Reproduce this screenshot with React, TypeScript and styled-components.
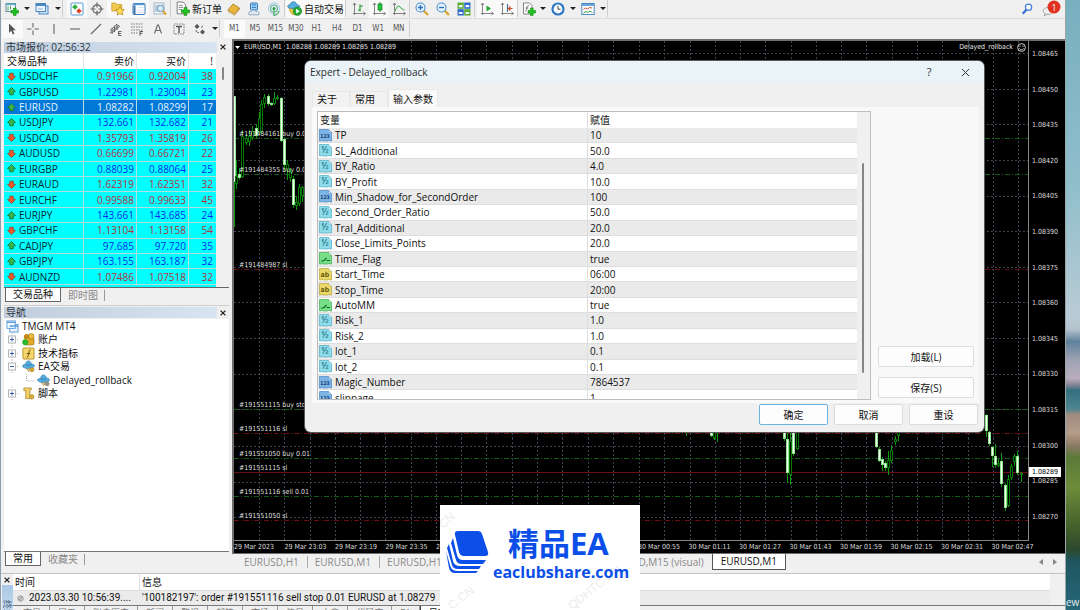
import React from 'react';
import styled, { createGlobalStyle, css } from 'styled-components';

const UI = '"Open Sans", "Noto Sans CJK SC", sans-serif';
const CHART = '"DejaVu Sans Condensed", "DejaVu Sans", sans-serif';

const GlobalStyle = createGlobalStyle`
  * { box-sizing: border-box; }
  body { margin: 0; font-family: ${UI}; font-size: 10px; line-height: 14px; color: #111; overflow: hidden; }
  button { font: inherit; color: inherit; border: 0; padding: 0; background: none; }
  svg { display: block; flex: none; }
`;

/* ---------- shell ---------- */
const Screen = styled.div`
  display: flex;
  height: 100vh;
  background: #7fa3b3;
`;
const Terminal = styled.div`
  position: relative;
  flex: 1;
  min-width: 0;
  display: flex;
  flex-direction: column;
  background: #f0f0f0;
  border-left: 1px solid #8d9dab;
  border-right: 1px solid #9aa5a8;
`;
const Desktop = styled.aside`
  width: 14px;
  overflow: hidden;
  display: flex;
  align-items: flex-end;
  color: #e6eef0;
  line-height: 15px;
  background: linear-gradient(
    #78afbe 0%, #8fbecb 30%, #b9cbd4 52%, #b5c2cd 54%, #5f819b 56%, #9fa3b4 59%,
    #b9aebd 62%, #8b8799 63%, #35707f 64%, #4d8590 67%, #a08c80 68%, #b59d8a 71%,
    #8d7a66 73%, #5c7a38 75%, #6c8c3a 80%, #47632c 86%, #2c4a2c 90%, #1f5560 92%, #266878 100%
  );
`;
const Main = styled.div`
  flex: 1;
  min-height: 0;
  display: flex;
`;

/* ---------- toolbars ---------- */
const Toolbar = styled.div<{ $line?: boolean }>`
  flex: none;
  height: ${p => (p.$line ? 19 : 20)}px;
  padding: 0 0 1px 1px;
  display: flex;
  align-items: center;
  ${p => p.$line && css`border-bottom: 1px solid #dcdcdc;`}
`;
const Tool = styled.button<{ $w?: number; $on?: boolean }>`
  width: ${p => p.$w ?? 21}px;
  height: 18px;
  flex: none;
  display: flex;
  align-items: center;
  justify-content: center;
  ${p => p.$on && css`background: #f9f9f9;`}
`;
const TextTool = styled.button<{ $on?: boolean }>`
  height: 18px;
  flex: none;
  display: flex;
  align-items: center;
  gap: 2px;
  padding: 0 1px;
  white-space: nowrap;
  ${p => p.$on && css`background: #f9f9f9;`}
`;
const Divider = styled.span<{ $w?: number }>`
  flex: none;
  width: ${p => p.$w ?? 4}px;
  height: 17px;
  border-left: 1px solid #cfcfcf;
`;
const Drop = styled.button`
  width: 9px;
  height: 18px;
  flex: none;
  display: flex;
  align-items: center;
  justify-content: center;
  &::after { content: ''; border: 3px solid transparent; border-top: 3px solid #222; border-bottom: 0; }
`;
const Grow = styled.span`flex: 1;`;
const ToolGrid = styled.div<{ $n: number; $w: number }>`
  display: grid;
  grid-template-columns: repeat(${p => p.$n}, 1fr);
  width: ${p => p.$w}px;
  flex: none;
`;
const Cell = styled.button<{ $on?: boolean }>`
  height: 18px;
  display: flex;
  align-items: center;
  justify-content: center;
  font: 8px/18px ${CHART};
  color: #555;
  ${p => p.$on && css`background: #fafafa;`}
`;

/* ---------- side bar ---------- */
const Sidebar = styled.div`
  width: 231px;
  flex: none;
  padding: 2px 3px 0 3px;
  display: flex;
  flex-direction: column;
`;
const PanelTitle = styled.div`
  height: 12px;
  flex: none;
  display: flex;
  align-items: center;
  line-height: 12px;
`;
const TitleText = styled.span`
  width: 213px;
  height: 11px;
  padding-left: 2px;
  line-height: 11px;
  color: #2b3440;
  background: linear-gradient(90deg, #bfcddc, #d7e5f3);
`;
const Close = styled.button`
  width: 12px;
  height: 11px;
  display: flex;
  align-items: center;
  justify-content: center;
`;
const MarketBody = styled.div`
  height: 235px;
  flex: none;
  display: flex;
  flex-direction: column;
  overflow: hidden;
  background: linear-gradient(90deg, #00ffff 212px, #f0f0f0 212px);
  border-bottom: 1px solid #666;
  position: relative;
`;
const Quotes = styled.table`
  width: 212px;
  height: 232px;
  flex: none;
  border-collapse: separate;
  border-spacing: 0;
  table-layout: fixed;
  th, td { padding: 0 2px 0 0; text-align: right; font-weight: 400; line-height: 14px; border-right: 1px solid #b4dede; border-bottom: 1px solid #b4dede; }
  th { height: 16px; background: #fff; border-color: #e4e4e4; border-bottom: 0; }
  th:first-child, td:first-child { text-align: left; padding-left: 3px; }
  th:last-child, td:last-child { border-right: 0; padding-right: 3px; }
`;
const QuoteRow = styled.tr<{ $up: boolean; $sel: boolean }>`
  color: ${p => (p.$sel ? '#e8f4ff' : p.$up ? '#0a2cf0' : '#b5303a')};
  background: ${p => (p.$sel ? '#0078d7' : '#00ffff')};
  td:first-child { color: ${p => (p.$sel ? '#e8f4ff' : '#062830')}; }
`;
const Symbol = styled.span`
  display: flex;
  align-items: center;
  gap: 3px;
`;
const Thumb = styled.span<{ $h: number; $x: number; $y: number }>`
  position: absolute;
  left: ${p => p.$x}px;
  top: ${p => p.$y}px;
  width: 2px;
  height: ${p => p.$h}px;
  border-radius: 1px;
  background: #868686;
`;
const Tabs = styled.div<{ $last?: boolean }>`
  height: 15px;
  flex: none;
  display: flex;
  padding-left: 1px;
  margin-bottom: ${p => (p.$last ? 6 : 0)}px;
`;
const SideTab = styled.button<{ $on?: boolean }>`
  height: 14px;
  padding: 0 7px;
  line-height: 13px;
  color: ${p => (p.$on ? '#111' : '#8a8a8a')};
  ${p => p.$on
    ? css`background: #fff; border: 1px solid #666; border-top: 0;`
    : css`background: linear-gradient(#999, #999) right center / 1px 11px no-repeat;`}
`;
const NavTitle = styled(PanelTitle)`
  margin-top: 2px;
  height: 14px;
  border-top: 1px solid #cfcfcf;
`;
const Tree = styled.ul`
  flex: 1;
  margin: 0;
  padding: 0 0 0 2px;
  list-style: none;
  background: #fff;
  border-bottom: 1px solid #777;
  display: grid;
  grid-template-rows: 14px 13px 14px 13px 14px 13px;
`;
const Node = styled.li<{ $depth: number }>`
  display: flex;
  align-items: center;
  gap: 3px;
  padding-left: ${p => (p.$depth === 2 ? 20 : 0)}px;
  line-height: 13px;
  white-space: nowrap;
`;

/* ---------- chart ---------- */
const ChartColumn = styled.div`
  flex: 1;
  min-width: 0;
  display: flex;
  flex-direction: column;
`;
const ChartFrame = styled.div`
  height: 515px;
  flex: none;
  background: #000;
  border: 1px solid #6e6e6e;
  border-width: 2px 0 1px 2px;
  display: grid;
  grid-template-columns: minmax(0, 1fr) 36px;
  grid-template-rows: 500px 12px;
  color: #dcdcdc;
  font: 7px/12px ${CHART};
  overflow: hidden;
`;
const Plot = styled.div`
  position: relative;
  border: 1px solid #858585;
  border-width: 0 1px 1px 0;
  overflow: hidden;
  svg.plot { position: absolute; inset: 0; width: 100%; height: 100%; }
`;
const PlotHeader = styled.div`
  position: relative;
  display: flex;
  align-items: center;
  height: 12px;
  padding: 0 2px 0 1px;
  gap: 4px;
  color: #e6e6e6;
  white-space: pre;
`;
const PriceAxis = styled.div`
  position: relative;
  padding-top: 7px;
  display: flex;
  flex-direction: column;
`;
const Prices = styled.div`
  height: 475px;
  display: flex;
  flex-direction: column;
  justify-content: space-between;
  padding-left: 3px;
`;
const PriceTag = styled.span`
  position: absolute;
  left: 0;
  top: 426px;
  width: 32px;
  height: 10px;
  padding-left: 3px;
  line-height: 10px;
  color: #000;
  background: #fff;
`;
const TimeAxis = styled.div`
  grid-column: 1 / 3;
  display: grid;
  grid-template-columns: repeat(16, 1fr);
  width: 808px;
  white-space: nowrap;
`;
const ChartTabs = styled.div`
  display: flex;
  height: 18px;
  padding-left: 4px;
  color: #8a8a8a;
`;
const ChartTab = styled.button<{ $on?: boolean }>`
  height: 16px;
  padding: 0 8px;
  line-height: 15px;
  white-space: nowrap;
  ${p => p.$on ? css`
    color: #111;
    background: #fff;
    border: 1px solid #555;
    border-top: 0;
  ` : css`
    &:not(:first-child) { background: linear-gradient(#aaa, #aaa) left center / 1px 12px no-repeat; }
  `}
`;
const Scrollers = styled.span`
  margin-left: auto;
  width: 26px;
  display: flex;
  gap: 10px;
  align-items: center;
  height: 15px;
`;

/* ---------- journal ---------- */
const Journal = styled.div`
  height: 37px;
  flex: none;
  display: flex;
  border-top: 1px solid #c4c4c4;
  overflow: hidden;
`;
const JournalHandle = styled.div`
  width: 12px;
  flex: none;
  display: flex;
  flex-direction: column;
  overflow: hidden;
`;
const Vertical = styled.span`
  margin: 0 0 0 1px;
  flex: 1;
  min-height: 0;
  padding-top: 15px;
  line-height: 11px;
  font-size: 9px;
  color: #46607a;
  background: linear-gradient(#a9c8e8, #c5daef);
  writing-mode: vertical-rl;
  text-orientation: sideways;
  white-space: nowrap;
`;
const JournalBody = styled.div`
  flex: 1;
  min-width: 0;
`;
const Log = styled.table`
  width: 100%;
  border-spacing: 0;
  table-layout: fixed;
  background: #fff;
  border-right: 15px solid #f0f0f0;
  th, td { padding: 0 0 0 2px; height: 16px; line-height: 15px; text-align: left; font-weight: 400; white-space: nowrap; }
  th:first-child { border-right: 1px solid #e0e0e0; }
  td { background: #ebebeb; border-top: 1px solid #dedede; height: 15px; line-height: 14px; font-family: Roboto, ${UI}; }
`;
const Stamp = styled.span`
  display: flex;
  align-items: center;
  gap: 5px;
  padding-left: 2px;
`;
const JournalTabs = styled.div`
  display: flex;
  border-top: 1px solid #777;
  padding-left: 2px;
  font-size: 9px;
  line-height: 14px;
  color: #777;
`;
const JournalTab = styled.button<{ $on?: boolean }>`
  flex: none;
  padding: 0 8px;
  border-right: 1px solid #999;
  white-space: nowrap;
  ${p => p.$on && css`background: #fff; color: #111; border-left: 1px solid #444; border-right-color: #444;`}
`;

/* ---------- dialog ---------- */
const Dialog = styled.section`
  position: absolute;
  left: 304px;
  top: 61px;
  width: 679px;
  border-radius: 6px;
  background: #f0f0f0;
  overflow: hidden;
  box-shadow: 0 0 0 1px #55595c;
  padding-bottom: 7px;
`;
const DialogTitle = styled.header`
  height: 22px;
  display: flex;
  align-items: center;
  padding: 0 12px 0 5px;
  background: #eaf4f8;
  color: #2c2c2c;
  span { flex: 1; }
`;
const TitleButton = styled.button`
  width: 14px;
  display: flex;
  justify-content: center;
  font-size: 11px;
  & + & { margin-left: 22px; }
`;
const DialogTabs = styled.div`
  height: 24px;
  padding: 6px 0 0 7px;
  display: flex;
  align-items: flex-end;
`;
const DialogTab = styled.button<{ $on?: boolean }>`
  height: ${p => (p.$on ? 18 : 16)}px;
  width: ${p => (p.$on ? 50 : 38)}px;
  padding-left: 4px;
  text-align: left;
  white-space: nowrap;
  line-height: ${p => (p.$on ? 16 : 15)}px;
  background: ${p => (p.$on ? '#fafafa' : '#f2f2f2')};
  border: 1px solid #e8e8e8;
  border-bottom: 0;
`;
const Page = styled.div`
  margin: 0 5px 0 7px;
  height: 296px;
  padding: 4px 5px 0;
  display: flex;
  background: #f9f9f9;
`;
const InputsFrame = styled.div`
  position: relative;
  width: 554px;
  height: 289px;
  border: 1px solid #bdbdbd;
  overflow: hidden;
  background: linear-gradient(90deg, #fff 539px, #f0f0f0 539px);
`;
const Inputs = styled.table`
  width: 539px;
  height: 294px;
  table-layout: fixed;
  border-spacing: 0;
  th, td { padding: 0 0 0 2px; text-align: left; font-weight: 400; line-height: 14px; border-bottom: 1px solid #dedede; }
  th { height: 16px; background: #fff; border-bottom: 0; }
  th:first-child, td:first-child { border-right: 1px solid #dedede; }
  td:first-child { padding-left: 1px; }
  tbody tr { background: #fff; }
  tbody tr:nth-child(odd) { background: #eaeaea; }
`;
const Param = styled.span`
  display: flex;
  align-items: center;
  gap: 3px;
  height: 14px;
`;
const Side = styled.div`
  width: 96px;
  margin-left: 7px;
  padding-top: 235px;
  display: flex;
  flex-direction: column;
  gap: 10px;
`;
const PushButton = styled.button<{ $main?: boolean }>`
  height: 21px;
  width: ${p => (p.$main === undefined ? 96 : 69)}px;
  background: #fdfdfd;
  border: 1px solid ${p => (p.$main ? '#6fb1e0' : '#dcdcdc')};
  border-radius: 2px;
  line-height: 18px;
`;
const Footer = styled.footer`
  padding: 1px 6px 0 0;
  display: flex;
  justify-content: flex-end;
  gap: 6px;
`;

/* ---------- watermark card ---------- */
const Brand = styled.div`
  position: absolute;
  left: 439px;
  top: 505px;
  width: 200px;
  height: 105px;
  background: #fff;
`;

/* ---------- data ---------- */
const quotes: [string, string, string, number, boolean][] = [
  ['USDCHF', '0.91966', '0.92004', 38, false],
  ['GBPUSD', '1.22981', '1.23004', 23, true],
  ['EURUSD', '1.08282', '1.08299', 17, true],
  ['USDJPY', '132.661', '132.682', 21, true],
  ['USDCAD', '1.35793', '1.35819', 26, false],
  ['AUDUSD', '0.66699', '0.66721', 22, false],
  ['EURGBP', '0.88039', '0.88064', 25, true],
  ['EURAUD', '1.62319', '1.62351', 32, false],
  ['EURCHF', '0.99588', '0.99633', 45, false],
  ['EURJPY', '143.661', '143.685', 24, true],
  ['GBPCHF', '1.13104', '1.13158', 54, false],
  ['CADJPY', '97.685', '97.720', 35, true],
  ['GBPJPY', '163.155', '163.187', 32, true],
  ['AUDNZD', '1.07486', '1.07518', 32, false],
];

type Kind = 'int' | 'real' | 'bool' | 'str';
const inputs: [Kind, string, string][] = [
  ['int', 'TP', '10'],
  ['real', 'SL_Additional', '50.0'],
  ['real', 'BY_Ratio', '4.0'],
  ['real', 'BY_Profit', '10.0'],
  ['int', 'Min_Shadow_for_SecondOrder', '100'],
  ['real', 'Second_Order_Ratio', '50.0'],
  ['real', 'Tral_Additional', '20.0'],
  ['real', 'Close_Limits_Points', '20.0'],
  ['bool', 'Time_Flag', 'true'],
  ['str', 'Start_Time', '06:00'],
  ['str', 'Stop_Time', '20:00'],
  ['bool', 'AutoMM', 'true'],
  ['real', 'Risk_1', '1.0'],
  ['real', 'Risk_2', '1.0'],
  ['real', 'lot_1', '0.1'],
  ['real', 'lot_2', '0.1'],
  ['int', 'Magic_Number', '7864537'],
  ['int', 'slippage', '1'],
];

const times = ['29 Mar 2023', '29 Mar 23:03', '29 Mar 23:19', '29 Mar 23:35', '29 Mar 23:51', '30 Mar 00:07', '30 Mar 00:23', '30 Mar 00:39',
  '30 Mar 00:55', '30 Mar 01:11', '30 Mar 01:27', '30 Mar 01:43', '30 Mar 01:59', '30 Mar 02:15', '30 Mar 02:31', '30 Mar 02:47'];

const orders: [number, string, string][] = [
  [138, '#191484161 buy 0.01', 'g'],
  [174, '#191484355 buy 0.01', 'g'],
  [269, '#191484987 sl', 'r'],
  [409, '#191551115 buy stop 0.01', 'g'],
  [433, '#191551116 sl', 'r'],
  [457, '#191551050 buy 0.01', 'g'],
  [471, '#191551115 sl', 'r'],
  [495, '#191551116 sell 0.01', 'g'],
  [519, '#191551050 sl', 'r'],
];

// x, wick top, wick bottom, body top, body bottom, falling candle (filled)
const candles: [number, number, number, number, number, boolean][] = [
  [235, 96, 227, 96, 182, true], [237, 160, 189, 176, 184, false], [240, 168, 180, 174, 178, true],
  [243, 130, 178, 136, 177, false], [247, 134, 145, 138, 143, false], [250, 130, 146, 136, 142, false],
  [253, 126, 140, 131, 138, false], [257, 124, 138, 128, 136, true], [260, 112, 134, 118, 133, false],
  [262, 100, 134, 104, 132, false], [265, 94, 108, 97, 104, false], [269, 94, 106, 96, 104, true],
  [272, 102, 106, 103, 105, true], [275, 92, 105, 98, 104, false], [278, 95, 100, 97, 99, false],
  [282, 97, 142, 98, 141, true], [285, 138, 172, 139, 165, true], [288, 160, 180, 164, 170, false],
  [291, 168, 182, 172, 178, false], [294, 176, 208, 179, 205, true], [297, 196, 210, 202, 206, false],
  [300, 184, 206, 187, 204, false], [303, 186, 202, 187, 196, false],
  [711, 430, 437, 430, 436, true], [714, 430, 439, 430, 438, false], [717, 430, 441, 430, 432, false],
  [686, 430, 436, 430, 432, false],
  [784, 430, 440, 430, 438, true], [787, 430, 482, 438, 472, true], [790, 430, 484, 440, 474, false],
  [793, 430, 455, 432, 453, true], [797, 430, 449, 430, 448, false],
  [876, 430, 447, 430, 446, true], [879, 446, 461, 448, 460, true], [882, 456, 470, 458, 464, true],
  [885, 460, 470, 462, 467, true], [888, 450, 474, 459, 467, false], [891, 444, 462, 449, 460, false],
  [895, 436, 444, 438, 441, false], [898, 430, 440, 430, 436, false],
  [986, 414, 437, 415, 431, true], [989, 431, 445, 432, 443, true], [992, 445, 466, 446, 455, true],
  [995, 443, 467, 455, 464, true], [998, 458, 466, 462, 465, false], [1001, 452, 486, 460, 483, true],
  [1005, 482, 510, 484, 507, true], [1008, 474, 506, 478, 505, false], [1011, 463, 479, 465, 477, false],
  [1014, 453, 465, 455, 461, false], [1017, 450, 474, 455, 472, true], [1021, 471, 481, 472, 474, false],
];

/* ---------- icons ---------- */
const Svg = ({ w = 14, children }: { w?: number; children: React.ReactNode }) => (
  <svg width={w} height={w} viewBox="0 0 14 14" fill="none" aria-hidden="true">{children}</svg>
);
const Plus = () => <path d="M8.500 6h2.600v2.400h2.400V11h-2.400v2.400H8.500V11H6V8.400h2.500z" fill="#21c321" stroke="#0c860c" strokeWidth=".6" />;
const NewChart = () => <Svg><rect x="1" y="1.500" width="9.500" height="8" fill="#fff" stroke="#5d8da0" /><path d="M1 2.500h9.500" stroke="#5fb3c8" strokeWidth="1.600" /><path d="M3 4.500v4M5.500 4v3.500" stroke="#3a9a5a" /><Plus /></Svg>;
const Profiles = () => <Svg><rect x="4" y="4" width="9" height="8" fill="#cfe6fa" stroke="#4b86bf" /><rect x="1" y="1.500" width="9.500" height="8" fill="#eaf5ff" stroke="#4b86bf" /><path d="M1 3h9.500" stroke="#4b86bf" strokeWidth="2" /><path d="M3 7h5" stroke="#8db8de" /></Svg>;
const MarketIcon = () => <Svg><rect x="1" y="1" width="12" height="12" rx="1" fill="#fbfdff" stroke="#5a9bd0" /><path d="m5 2.200 2.800 2.800L5 7.800 2.200 5z" fill="#2fae3f" /><path d="m9 6.200 2.800 2.800L9 11.800 6.200 9z" fill="#e04a2c" /></Svg>;
const Target = () => <Svg><circle cx="7" cy="7" r="4.200" stroke="#666" strokeWidth="1.300" /><path d="M7 0.500v5M7 8.500v5M.5 7h5M8.500 7h5" stroke="#666" strokeWidth="1.200" /></Svg>;
const Favorites = () => <Svg><path d="M.8 1h4l1 1.500h5V9H.8z" fill="#f3c94d" stroke="#c29324" strokeWidth=".7" /><path d="m9 4.500 1.400 2.800 3 .4-2.200 2.100.6 3.200L9 11.600 6.200 13l.6-3.200-2.200-2.100 3-.4z" fill="#ffdf58" stroke="#b98b1c" strokeWidth=".8" /></Svg>;
const NavIcon = () => <Svg><rect x="1" y="1.500" width="12" height="11" rx="1" fill="#fff" stroke="#3c7ab8" /><path d="M1.500 2.500h11" stroke="#5ba0dc" strokeWidth="1.500" /><rect x="1.500" y="3.500" width="2" height="8.500" fill="#3e72a8" /><path d="M5.500 5.500H12M5.500 8H12M5.500 10.500H12" stroke="#dbe8f4" /></Svg>;
const Tester = () => <Svg><rect x="1" y="1" width="10" height="11" fill="#f4f8fc" stroke="#9fb6c8" /><path d="M3 3v7M5 2.500v7M9 2.500v4" stroke="#7ca1bd" /><circle cx="7.500" cy="6.500" r="3.200" fill="#d6ecfa" stroke="#6c93b2" /><path d="m10 9 3 3.600" stroke="#d9a02c" strokeWidth="2" /></Svg>;
const OrderIcon = () => <Svg w={15}><path d="M2 1h5.500L10 3.500V12H2z" fill="#fff" stroke="#777" strokeWidth=".9" /><path d="M3.500 4h4M3.500 6h4M3.500 8h3" stroke="#888" strokeWidth=".9" /><Plus /></Svg>;
const Book = () => <Svg><path d="M1 8 6 2l6.500 4-5 6z" fill="#eab73a" stroke="#a77512" strokeWidth=".8" /><path d="m1 8 6.500 4 5-6v1.500L7.500 13.300 1 9.500z" fill="#fff3c8" stroke="#a77512" strokeWidth=".6" /></Svg>;
const Vps = () => <Svg><rect x="3.500" y="1" width="7" height="7" rx="1" fill="#9fd0f5" stroke="#3679b8" /><path d="M5 3h4M5 5.500h4" stroke="#2f7fc8" /><path d="M2 12.800c-1.200-2 .2-3.800 2-3.500 1-1.600 4.300-1.600 5 0 2.200-.5 3.800 1.500 3 3.500z" fill="#dfe9f4" stroke="#7d98b6" strokeWidth=".8" /></Svg>;
const Signal = () => <Svg><circle cx="7" cy="6.500" r="5.700" fill="#e2eef5" stroke="#a9cbe6" /><circle cx="7" cy="6.500" r="3.500" stroke="#69b58b" strokeWidth="1.200" /><circle cx="7" cy="6.500" r="1.500" fill="#2a9d45" /><path d="M7 8v5.500c2.500-.5 4.500-2 5-4.500" stroke="#4fb066" strokeWidth="1.200" /></Svg>;
const Hat = ({ c = '#dca92a' }: { c?: string }) => <><path d="m4.500 8.500 2.500 4 3-3" fill="#e8c890" stroke="#c99a50" /><path d="M.5 6.500C1 5 3 4.700 4 4.500 4.300 2 5.500 1 7 1s2.700 1 3 3.300c1.200.2 3 .5 3.500 1.700C13 8.500 10 9 7 9S1 8.500.5 6.500z" fill="#55aee0" stroke="#2874a6" strokeWidth=".7" /><path d="M4 5c1.500 1 4.500 1 6 0" stroke="#2a77ab" /><circle cx="10.800" cy="10.500" r="2.300" fill={c} stroke="#8d7a3a" strokeWidth=".5" /></>;
const AutoTrade = () => <Svg w={15}><path d="M2 5.500h8c.5 4-1 7-3.500 7.500C4 12.500 2 9.500 2 5.500z" fill="#f0cb4a" stroke="#b8922a" strokeWidth=".6" /><path d="M.5 5C.8 3.700 2.300 3.600 3 3.400 3.300 1.500 4.500.8 6 .8s2.700.7 3 2.600c1 .2 2.600.4 3 1.600C11 6.700 9 7 6 7S1 6.700.5 5z" fill="#55aee0" stroke="#2874a6" strokeWidth=".7" /><circle cx="9.700" cy="9.500" r="3.900" fill="#25ad35" stroke="#12781f" strokeWidth=".6" /><path d="m8.500 7.300 3.400 2.200-3.400 2.200z" fill="#fff" /></Svg>;
const Axes = () => <path d="M2.500 1v12M1 11.500h12.500M1 3l1.500-2L4 3M11.500 10l2 1.500-2 1.500" stroke="#777" strokeWidth=".9" />;
const Bars = () => <Svg><Axes /><path d="M8 2.500v7M6 8h2M8 4h3" stroke="#2c9c3a" strokeWidth="1.200" /></Svg>;
const CandleIcon = () => <Svg><Axes /><path d="M8 0v10" stroke="#167f26" /><rect x="6" y="2" width="4" height="6" fill="#21c53b" stroke="#167f26" strokeWidth=".7" /></Svg>;
const LineIcon = () => <Svg><Axes /><path d="M3 9c2-5 3.500-6 5-4s2.500 2.500 4.500 3" stroke="#4db35a" strokeWidth="1.100" /></Svg>;
const Zoom = ({ plus }: { plus?: boolean }) => <Svg><path d="m8.500 8.500 4.500 4.500" stroke="#dba634" strokeWidth="2.400" /><circle cx="5.500" cy="5.500" r="4.500" fill="#e6f4ff" stroke="#4b8fd0" strokeWidth="1.100" /><path d={plus ? 'M3 5.500h5M5.500 3v5' : 'M3 5.500h5'} stroke="#2b70b8" strokeWidth="1.400" /></Svg>;
const Tile = () => <Svg><rect x=".5" y=".5" width="6.300" height="6.300" fill="#5aad2e" /><rect x="7.200" y=".5" width="6.300" height="6.300" fill="#2f68c8" /><rect x=".5" y="7.200" width="6.300" height="6.300" fill="#2f68c8" /><rect x="7.200" y="7.200" width="6.300" height="6.300" fill="#5aad2e" /><path d="M1.800 4.200h3.800M8.500 4.200h3.800M1.800 11h3.800M8.500 11h3.800" stroke="#eef6ff" strokeWidth="2.200" /></Svg>;
const Scroll = () => <Svg><Axes /><path d="m6.500 3.500 4.500 3-4.500 3z" fill="#27a737" /></Svg>;
const Shift = () => <Svg><Axes /><path d="M7.500 2v8" stroke="#4a6d94" strokeWidth="1.200" /><path d="m12.500 6.500-4 0 2-2m-2 2 2 2" stroke="#c85028" strokeWidth="1.200" /></Svg>;
const Indicators = () => <Svg><path d="M1.500 1h6L10 3.500V12H1.500z" fill="#fff" stroke="#777" strokeWidth=".9" /><path d="M6.800 3.500C4 3 5.500 9 3.300 9.500M3.500 6h3" stroke="#666" strokeWidth=".9" /><Plus /></Svg>;
const Clock = () => <Svg><circle cx="7" cy="7" r="5.500" fill="#fff" stroke="#2f78c4" strokeWidth="2.200" /><path d="M7 3.800V7.200h2.600" stroke="#444" /></Svg>;
const Template = () => <Svg><rect x=".8" y="1.500" width="12.400" height="11" fill="#fff" stroke="#4b88bd" /><path d="M1 3h12" stroke="#5a9ed6" strokeWidth="1.800" /><path d="m2.500 7.500 2-1.500 2 1 2-1.500 2.500.5" stroke="#c4523a" /><path d="m2.500 11 2.500-1.500 2 1 2-1.500 2.500 1.500" stroke="#3fa04c" /></Svg>;
const Cursor = () => <Svg><path d="M4 1.500v9.500l2.200-2.200 1.700 3.700 1.600-.8L7.800 8.300h3z" fill="#555" /></Svg>;
const G = ({ d }: { d: string }) => <Svg><path d={d} stroke="#666" strokeWidth="1.100" /></Svg>;
const Channel = () => <Svg><path d="M1 8.500 8 2M3 11l8-7M3 6v6M5.500 4v6M8 2v6M1 11l9-8" stroke="#666" /><path d="M9.500 9.500h3M9.500 11.500h2.500M9.500 13.500h3M9.700 9.500v4" stroke="#555" strokeWidth=".9" /></Svg>;
const Fibo = () => <Svg><path d="M1 2h12M1 5h12M1 8h12M1 11h7" stroke="#777" strokeDasharray="1.500 1" /><path d="M10 9.500h3M10 11.300h2.400M10 9.200v4.500" stroke="#555" /></Svg>;
const TextBox = () => <Svg><rect x="2" y="2" width="10" height="10" stroke="#777" strokeDasharray="1.500 1" /><path d="M4 4.500h6M7 4.500V11" stroke="#555" strokeWidth="1.400" /></Svg>;
const Arrows = () => <Svg><path d="m4 2 2.500 2.500L4 7 1.500 4.500z" fill="#555" /><path d="m9.500 7.500 2.500 2.500-2.500 2.500L7 10z" fill="#555" /><path d="M3 8c0 2 1 2.500 3 2.500M8 5.500l2-1.500" stroke="#666" /></Svg>;
const Dir = ({ up }: { up: boolean }) => (
  <svg width="9" height="9" viewBox="0 0 9 9" aria-hidden="true">
    {up ? <path d="M4.500.5 8.500 4.500 6.300 5v2.800H2.700V5L.5 4.500z" fill="#35b54a" stroke="#1b6e33" strokeWidth=".8" />
      : <path d="M4.500 8.500 8.500 4.500 6.300 4V1.200H2.700V4L.5 4.500z" fill="#f0562a" stroke="#8a4a32" strokeWidth=".8" />}
  </svg>
);
const X = ({ s = 5, c = '#222', t = 1.3 }: { s?: number; c?: string; t?: number }) => (
  <svg width={s} height={s} viewBox="0 0 10 10" aria-hidden="true"><path d="m1 1 8 8M9 1 1 9" stroke={c} strokeWidth={(t * 10) / s} /></svg>
);
const kinds: Record<Kind, [string, string, string]> = {
  int: ['#7db4e6', '#4a86c4', '#12406e'],
  real: ['#8edcea', '#52aec4', '#1f7286'],
  bool: ['#78e088', '#3fae55', '#116b22'],
  str: ['#ead968', '#b8a436', '#6d5d10'],
};
const KindIcon = ({ kind }: { kind: Kind }) => {
  const [fill, line, ink] = kinds[kind];
  return (
    <svg width="13" height="13" viewBox="0 0 13 13" aria-hidden="true">
      <path d="M.5.5h9l3 3v8.500H11l-1-.8-1.500.8H4L3 11.300l-1 .7H.5z" fill={fill} stroke={line} strokeWidth=".7" />
      <path d="M9.500.5v3h3z" fill="#fff" opacity=".7" stroke={line} strokeWidth=".5" />
      {kind === 'bool' && <path d="M2 9h2.500l3-3M7.500 8.500H11" stroke={ink} strokeWidth="1.200" fill="none" />}
      {kind === 'real' && <text x="6" y="9" textAnchor="middle" fontFamily="Open Sans, sans-serif" fontWeight="600" fontSize="9" fill={ink}>½</text>}
      {(kind === 'int' || kind === 'str') && (
        <text x="6" y="9" textAnchor="middle" fontFamily="DejaVu Sans Condensed, sans-serif" fontWeight="700" fontSize={kind === 'str' ? 7 : 5} fill={ink}>
          {kind === 'int' ? '123' : 'ab'}
        </text>
      )}
    </svg>
  );
};
const Expander = ({ open }: { open?: boolean }) => (
  <svg width="13" height="13" viewBox="0 0 13 13" aria-hidden="true">
    <path d="M6 0v13M9 6.500h4" stroke="#bbb" strokeDasharray="1 1" />
    <rect x="2.500" y="3" width="7" height="7" fill="#fff" stroke="#b5b5b5" />
    <path d={open ? 'M4 6.500h4' : 'M4 6.500h4M6 4.500v4'} stroke="#3a5fa8" />
  </svg>
);

const ChartDrawing = () => (
  <svg className="plot" viewBox="234 41 793 499" preserveAspectRatio="xMaxYMin slice" shapeRendering="crispEdges">
    <g stroke="#3c4650" strokeDasharray="2 2">
      {Array.from({ length: 31 }, (_, i) => {
        const x = Math.round(259 + i * 25.27) + 0.5;
        return <line key={x} x1={x} x2={x} y1="41" y2="540" />;
      })}
      {Array.from({ length: 14 }, (_, i) => {
        const y = Math.round(53 + i * 35.64) + 0.5;
        return <line key={y} x1="234" x2="1028" y1={y} y2={y} />;
      })}
    </g>
    {orders.map(([y, label, c]) => (
      <line key={label} x1="234" x2="1028" y1={y + 0.5} y2={y + 0.5} stroke={c === 'g' ? '#125c16' : '#6c0d12'} strokeDasharray={y === 471 ? undefined : '5 2 1 2'} />
    ))}
    <g transform="translate(-1 0)">
      {candles.map(([x, wt, wb, bt, bb, down]) => (
        <g key={x}>
          <line x1={x + 0.5} x2={x + 0.5} y1={wt} y2={wb} stroke="#0a9a0a" />
          <rect x={x - 0.5} y={bt + 0.5} width="2" height={Math.max(1, bb - bt - 1)} fill={down ? '#f4fff4' : '#000'} stroke={down ? '#8fe08f' : '#067a06'} />
        </g>
      ))}
    </g>
    <g fill="#dedede" fontFamily={CHART} fontSize="7">
      {orders.map(([y, label]) => <text key={label} x="239" y={y - 2}>{label}</text>)}
    </g>
  </svg>
);

const Logo = () => (
  <svg width="200" height="105" viewBox="0 0 200 105" role="img" aria-label="精品EA eaclubshare.com">
    <g fill="#ededed" fontFamily="Liberation Sans, sans-serif" fontSize="12">
      <text transform="translate(3 24) rotate(-42)">CN</text>
      <text transform="translate(12 105) rotate(-38)">C.CN</text>
      <text transform="translate(132 105) rotate(-38)">QDHTC.CN</text>
    </g>
    <g fill="#0b4fe8">
      <path d="M18 26h20q3 0 4 3l6 18q1 4-3 4H24q-4 0-5-4l-4-17q-1-4 3-4z" />
      <path d="M13 33l4 17q1 5 6 5h23l-3 4H22q-5 0-6-4l-5-17z" />
      <path d="M9 39l4 17q1 5 7 5h21l-2 3H18q-5 0-6-4L7 43z" />
      <path d="M6 46l4 14q1 6 8 6h20l-2 2H15q-5 0-6-5z" />
    </g>
    <text x="68" y="50" fontFamily="Open Sans, Noto Sans CJK SC, sans-serif" fontWeight="700" fontSize="31" fill="#0b4fe8">精品EA</text>
    <text x="53" y="73" fontFamily="Open Sans, sans-serif" fontWeight="700" fontSize="16" fill="#0b4fe8">eaclubshare.com</text>
  </svg>
);

export default function App() {
  return (
    <Screen>
      <GlobalStyle />
      <Terminal>
        <Toolbar $line>
          <Tool $w={20}><NewChart /></Tool><Drop />
          <Tool $w={22}><Profiles /></Tool><Drop />
          <Divider $w={5} />
          <Tool $w={20} $on><MarketIcon /></Tool>
          <Tool $w={20}><Target /></Tool>
          <Tool $on><Favorites /></Tool>
          <Tool $on><NavIcon /></Tool>
          <Tool><Tester /></Tool>
          <Divider />
          <TextTool><OrderIcon />新订单</TextTool>
          <Tool><Book /></Tool>
          <Tool $w={20}><Vps /></Tool>
          <Tool $w={20}><Signal /></Tool>
          <Divider $w={2} />
          <TextTool $on><AutoTrade />自动交易</TextTool>
          <Divider />
          <Tool $w={20}><Bars /></Tool>
          <Tool $w={20} $on><CandleIcon /></Tool>
          <Tool $w={20}><LineIcon /></Tool>
          <Divider $w={2} />
          <Tool><Zoom plus /></Tool>
          <Tool><Zoom /></Tool>
          <Tool><Tile /></Tool>
          <Divider $w={3} />
          <Tool $w={20} $on><Scroll /></Tool>
          <Tool $w={20} $on><Shift /></Tool>
          <Divider $w={3} />
          <Tool $w={18}><Indicators /></Tool><Drop />
          <Tool><Clock /></Tool><Drop />
          <Tool><Template /></Tool><Drop />
          <Divider />
          <Grow />
          <Tool>
            <Svg w={12}><path d="M2 12.500 6.500 7.500" stroke="#3b6fd0" strokeWidth="2.600" /><circle cx="8.800" cy="5" r="3.600" fill="#fff" stroke="#4a7fdd" strokeWidth="1.500" /></Svg>
          </Tool>
          <Tool $w={28}>
            <svg width="22" height="18" viewBox="0 0 22 18">
              <ellipse cx="8" cy="11" rx="5" ry="3.500" fill="#eee" stroke="#aaa" /><path d="m5 13-1 3 4-2" fill="#ddd" stroke="#aaa" />
              <circle cx="14" cy="7" r="6.500" fill="#e0301e" /><text x="14" y="10.500" textAnchor="middle" fontSize="9" fontFamily="Open Sans" fill="#fff">1</text>
            </svg>
          </Tool>
        </Toolbar>
        <Toolbar>
          <ToolGrid $n={10} $w={208}>
            <Cell $on><Cursor /></Cell>
            <Cell><G d="M7 1v4.500M7 8.500V13M1 7h4.500M8.500 7H13" /></Cell>
            <Cell><G d="M7 2v10" /></Cell>
            <Cell><G d="M2 7h10" /></Cell>
            <Cell><G d="M2 12 12 2" /></Cell>
            <Cell><Channel /></Cell>
            <Cell><Fibo /></Cell>
            <Cell><G d="m3.500 11.500 3-8.500h1l3 8.500M5 8.500h4" /></Cell>
            <Cell><TextBox /></Cell>
            <Cell><Arrows /></Cell>
          </ToolGrid>
          <Drop />
          <Divider $w={5} />
          <ToolGrid $n={9} $w={185}>
            {['M1', 'M5', 'M15', 'M30', 'H1', 'H4', 'D1', 'W1', 'MN'].map((t, i) => <Cell key={t} $on={i === 0}>{t}</Cell>)}
          </ToolGrid>
          <Divider />
        </Toolbar>

        <Main>
          <Sidebar>
            <PanelTitle><TitleText>市场报价: 02:56:32</TitleText><Close aria-label="关闭"><X s={6} /></Close></PanelTitle>
            <MarketBody>
              <Quotes>
                <colgroup><col width="80" /><col width="53" /><col width="52" /><col width="27" /></colgroup>
                <thead><tr><th>交易品种</th><th>卖价</th><th>买价</th><th>!</th></tr></thead>
                <tbody>
                  {quotes.map(([s, bid, ask, spread, up]) => (
                    <QuoteRow key={s} $up={up} $sel={s === 'EURUSD'}>
                      <td><Symbol><Dir up={up} />{s}</Symbol></td><td>{bid}</td><td>{ask}</td><td>{spread}</td>
                    </QuoteRow>
                  ))}
                </tbody>
              </Quotes>
              <Thumb $x={218} $y={14} $h={13} />
            </MarketBody>
            <Tabs><SideTab $on>交易品种</SideTab><SideTab>即时图</SideTab></Tabs>
            <NavTitle><TitleText>导航</TitleText><Close aria-label="关闭"><X s={6} /></Close></NavTitle>
            <Tree>
              <Node $depth={0}><Svg w={13}><rect x="4" y="5" width="9" height="8" fill="#e6f3ff" stroke="#5a9bd6" /><rect x="1" y="1" width="9" height="8" fill="#f5fbff" stroke="#5a9bd6" /><path d="M1 2.500h9M4 6.500h9" stroke="#5a9bd6" strokeWidth="1.500" /></Svg>TMGM MT4</Node>
              <Node $depth={1}><Expander /><Svg w={13}><circle cx="5" cy="4" r="3" fill="#c58a18" /><rect x="3" y="5" width="10" height="8" rx="2" fill="#e0a92a" stroke="#8d6510" strokeWidth=".6" /><circle cx="10" cy="3.500" r="3" fill="#efbe3e" stroke="#8d6510" strokeWidth=".6" /><circle cx="3.500" cy="10" r="3.200" fill="#2bb52b" /></Svg>账户</Node>
              <Node $depth={1}><Expander /><Svg w={13}><rect x="1" y="1" width="12" height="12" rx="1" fill="#f5d66a" stroke="#b8912a" /><path d="M9.500 3C6.500 2.500 8 11 5 11.300M5 7h4" stroke="#5d4a10" /></Svg>技术指标</Node>
              <Node $depth={1}><Expander open /><Svg w={13}><Hat /></Svg>EA交易</Node>
              <Node $depth={2}><svg width="8" height="13" viewBox="0 0 8 13"><path d="M.5 0v7H8" stroke="#aaa" strokeDasharray="1 1" fill="none" /></svg><Svg w={13}><Hat c="#8d9299" /></Svg>Delayed_rollback</Node>
              <Node $depth={1}><Expander /><Svg w={13}><path d="M2 1h8v2H8.500v7H11v2.500H4V4H2z" fill="#f2cf62" stroke="#a8842a" strokeWidth=".8" /><circle cx="10.500" cy="10.500" r="2.400" fill="#dcae38" stroke="#8d6d1d" strokeWidth=".5" /></Svg>脚本</Node>
            </Tree>
            <Tabs $last><SideTab $on>常用</SideTab><SideTab>收藏夹</SideTab></Tabs>
          </Sidebar>

          <ChartColumn>
            <ChartFrame>
              <Plot>
                <ChartDrawing />
                <PlotHeader>
                  <svg width="5" height="3" viewBox="0 0 5 3"><path d="M0 0h5L2.500 3z" fill="#fff" /></svg>
                  EURUSD,M1  1.08288 1.08289 1.08285 1.08289
                  <Grow />
                  Delayed_rollback
                  <svg width="9" height="9" viewBox="0 0 9 9" fill="none" stroke="#e6e6e6" strokeWidth=".9"><circle cx="4.500" cy="4.500" r="3.900" /><path d="M3 2.600v1.200M6 2.600v1.200M2.400 5.500c1 1.600 3.200 1.600 4.200 0" /></svg>
                </PlotHeader>
              </Plot>
              <PriceAxis>
                <Prices>{Array.from({ length: 14 }, (_, i) => <span key={i}>{((108465 - i * 15) / 100000).toFixed(5)}</span>)}</Prices>
                <PriceTag>1.08289</PriceTag>
              </PriceAxis>
              <TimeAxis>{times.map(t => <span key={t}>{t}</span>)}</TimeAxis>
            </ChartFrame>
            <ChartTabs>
              <ChartTab>EURUSD,H1</ChartTab><ChartTab>EURUSD,M1</ChartTab><ChartTab>EURUSD,H1</ChartTab>
              <ChartTab>EURUSD,H1</ChartTab><ChartTab>EURUSD,M15</ChartTab><ChartTab>EURUSD,M15 (visual)</ChartTab>
              <ChartTab $on>EURUSD,M1</ChartTab>
              <Scrollers>
                <svg width="4" height="6" viewBox="0 0 4 6"><path d="M4 0v6L0 3z" fill="#888" /></svg>
                <svg width="4" height="6" viewBox="0 0 4 6"><path d="M0 0v6l4-3z" fill="#888" /></svg>
              </Scrollers>
            </ChartTabs>
          </ChartColumn>
        </Main>

        <Journal>
          <JournalHandle><Close aria-label="关闭"><X s={6} /></Close><Vertical>终端</Vertical></JournalHandle>
          <JournalBody>
            <Log>
              <colgroup><col width="127" /><col /></colgroup>
              <thead><tr><th>时间</th><th>信息</th></tr></thead>
              <tbody><tr>
                <td><Stamp><svg width="7" height="7" viewBox="0 0 7 7"><circle cx="3.500" cy="3.500" r="2.700" fill="#ccc" stroke="#999" /><path d="m2 5 3-3" stroke="#888" /></svg>2023.03.30 10:56:39....</Stamp></td>
                <td>'100182197': order #191551116 sell stop 0.01 EURUSD at 1.08279</td>
              </tr></tbody>
            </Log>
            <JournalTabs>
              {['交易', '展示', '账户历史', '新闻', '警报', '邮箱', '市场', '信号', '文章', '代码库', 'EA', '日志'].map(t => <JournalTab key={t} $on={t === '日志'}>{t}</JournalTab>)}
            </JournalTabs>
          </JournalBody>
        </Journal>

        <Dialog role="dialog" aria-label="Expert - Delayed_rollback">
          <DialogTitle>
            <span>Expert - Delayed_rollback</span>
            <TitleButton>?</TitleButton>
            <TitleButton aria-label="关闭"><X s={9} t={1} c="#333" /></TitleButton>
          </DialogTitle>
          <DialogTabs><DialogTab>关于</DialogTab><DialogTab>常用</DialogTab><DialogTab $on>输入参数</DialogTab></DialogTabs>
          <Page>
            <InputsFrame>
              <Inputs>
                <colgroup><col width="270" /><col /></colgroup>
                <thead><tr><th>变量</th><th>赋值</th></tr></thead>
                <tbody>{inputs.map(([k, n, v]) => <tr key={n}><td><Param><KindIcon kind={k} />{n}</Param></td><td>{v}</td></tr>)}</tbody>
              </Inputs>
              <Thumb $x={544} $y={51} $h={210} />
            </InputsFrame>
            <Side><PushButton>加载(L)</PushButton><PushButton>保存(S)</PushButton></Side>
          </Page>
          <Footer><PushButton $main>确定</PushButton><PushButton $main={false}>取消</PushButton><PushButton $main={false}>重设</PushButton></Footer>
        </Dialog>

        <Brand><Logo /></Brand>
      </Terminal>
      <Desktop>ew</Desktop>
    </Screen>
  );
}
